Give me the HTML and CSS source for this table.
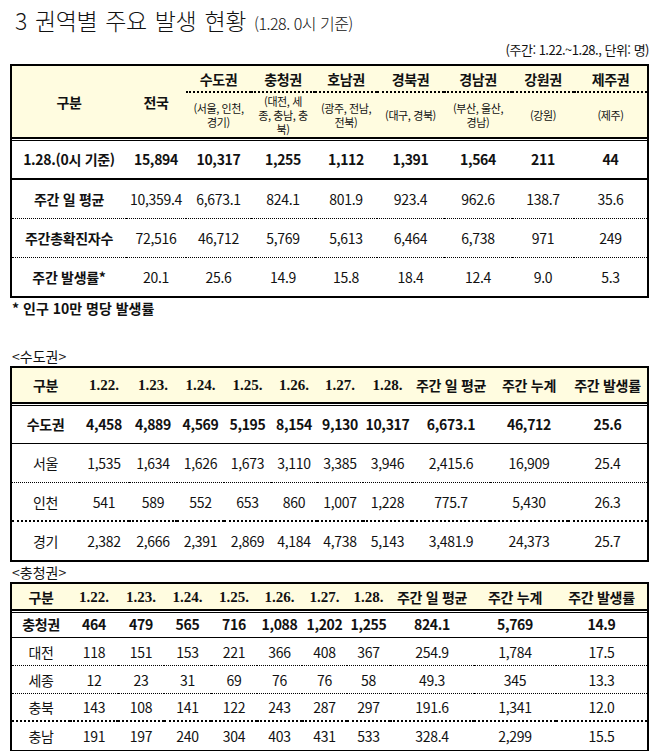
FILE: index.html
```html
<!DOCTYPE html>
<html lang="ko">
<head>
<meta charset="utf-8">
<title>권역별 주요 발생 현황</title>
<link rel="stylesheet" href="styles.css">
</head>
<body>
<div class="page">
  <h1 class="title">3 권역별 주요 발생 현황 <small>(1.28. 0시 기준)</small></h1>
  <div class="unit">(주간: 1.22.~1.28., 단위: 명)</div>

  <table class="tbl t1">
    <colgroup>
      <col style="width:114px"><col style="width:60px"><col style="width:65px"><col style="width:64px"><col style="width:62px"><col style="width:67px"><col style="width:68px"><col style="width:62px"><col style="width:73px">
    </colgroup>
    <tr class="ra">
      <td class="hcell span" rowspan="2">구분</td>
      <td class="hcell span" rowspan="2">전국</td>
      <td class="hcell reg">수도권</td>
      <td class="hcell reg">충청권</td>
      <td class="hcell reg">호남권</td>
      <td class="hcell reg">경북권</td>
      <td class="hcell reg">경남권</td>
      <td class="hcell reg">강원권</td>
      <td class="hcell reg">제주권</td>
    </tr>
    <tr class="rb">
      <td class="hcell sub">(서울, 인천,<br>경기)</td>
      <td class="hcell sub">(대전, 세<br>종, 충남, 충<br>북)</td>
      <td class="hcell sub">(광주, 전남,<br>전북)</td>
      <td class="hcell sub">(대구, 경북)</td>
      <td class="hcell sub">(부산, 울산,<br>경남)</td>
      <td class="hcell sub">(강원)</td>
      <td class="hcell sub">(제주)</td>
    </tr>
    <tr class="first bold r41 line2">
      <td>1.28.(0시 기준)</td><td>15,894</td><td>10,317</td><td>1,255</td><td>1,112</td><td>1,391</td><td>1,564</td><td>211</td><td>44</td>
    </tr>
    <tr class="r39 dot1">
      <td class="lab">주간 일 평균</td><td>10,359.4</td><td>6,673.1</td><td>824.1</td><td>801.9</td><td>923.4</td><td>962.6</td><td>138.7</td><td>35.6</td>
    </tr>
    <tr class="r39 dot1">
      <td class="lab">주간총확진자수</td><td>72,516</td><td>46,712</td><td>5,769</td><td>5,613</td><td>6,464</td><td>6,738</td><td>971</td><td>249</td>
    </tr>
    <tr class="r38">
      <td class="lab">주간 발생률*</td><td>20.1</td><td>25.6</td><td>14.9</td><td>15.8</td><td>18.4</td><td>12.4</td><td>9.0</td><td>5.3</td>
    </tr>
  </table>
  <p class="note">* 인구 10만 명당 발생률</p>

  <p class="label gap">&lt;수도권&gt;</p>
  <table class="tbl t2">
    <colgroup>
      <col style="width:67px"><col style="width:50px"><col style="width:48px"><col style="width:47px"><col style="width:47px"><col style="width:46px"><col style="width:46px"><col style="width:49px"><col style="width:78px"><col style="width:78px"><col style="width:79px">
    </colgroup>
    <tr class="hd r36">
      <td>구분</td><td class="dt">1.22.</td><td class="dt">1.23.</td><td class="dt">1.24.</td><td class="dt">1.25.</td><td class="dt">1.26.</td><td class="dt">1.27.</td><td class="dt">1.28.</td><td>주간 일 평균</td><td>주간 누계</td><td>주간 발생률</td>
    </tr>
    <tr class="first bold r40 line1">
      <td>수도권</td><td>4,458</td><td>4,889</td><td>4,569</td><td>5,195</td><td>8,154</td><td>9,130</td><td>10,317</td><td>6,673.1</td><td>46,712</td><td>25.6</td>
    </tr>
    <tr class="r39 dot1">
      <td>서울</td><td>1,535</td><td>1,634</td><td>1,626</td><td>1,673</td><td>3,110</td><td>3,385</td><td>3,946</td><td>2,415.6</td><td>16,909</td><td>25.4</td>
    </tr>
    <tr class="r39 dot2">
      <td>인천</td><td>541</td><td>589</td><td>552</td><td>653</td><td>860</td><td>1,007</td><td>1,228</td><td>775.7</td><td>5,430</td><td>26.3</td>
    </tr>
    <tr class="r38">
      <td>경기</td><td>2,382</td><td>2,666</td><td>2,391</td><td>2,869</td><td>4,184</td><td>4,738</td><td>5,143</td><td>3,481.9</td><td>24,373</td><td>25.7</td>
    </tr>
  </table>

  <p class="label">&lt;충청권&gt;</p>
  <table class="tbl t3">
    <colgroup>
      <col style="width:58px"><col style="width:48px"><col style="width:46px"><col style="width:47px"><col style="width:46px"><col style="width:45px"><col style="width:45px"><col style="width:43px"><col style="width:84px"><col style="width:82px"><col style="width:91px">
    </colgroup>
    <tr class="hd r27">
      <td>구분</td><td class="dt">1.22.</td><td class="dt">1.23.</td><td class="dt">1.24.</td><td class="dt">1.25.</td><td class="dt">1.26.</td><td class="dt">1.27.</td><td class="dt">1.28.</td><td>주간 일 평균</td><td>주간 누계</td><td>주간 발생률</td>
    </tr>
    <tr class="first bold r27 line1">
      <td>충청권</td><td>464</td><td>479</td><td>565</td><td>716</td><td>1,088</td><td>1,202</td><td>1,255</td><td>824.1</td><td>5,769</td><td>14.9</td>
    </tr>
    <tr class="r28 dot1">
      <td>대전</td><td>118</td><td>151</td><td>153</td><td>221</td><td>366</td><td>408</td><td>367</td><td>254.9</td><td>1,784</td><td>17.5</td>
    </tr>
    <tr class="r28 dot1">
      <td>세종</td><td>12</td><td>23</td><td>31</td><td>69</td><td>76</td><td>76</td><td>58</td><td>49.3</td><td>345</td><td>13.3</td>
    </tr>
    <tr class="r28 dot2">
      <td>충북</td><td>143</td><td>108</td><td>141</td><td>122</td><td>243</td><td>287</td><td>297</td><td>191.6</td><td>1,341</td><td>12.0</td>
    </tr>
    <tr class="r28">
      <td>충남</td><td>191</td><td>197</td><td>240</td><td>304</td><td>403</td><td>431</td><td>533</td><td>328.4</td><td>2,299</td><td>15.5</td>
    </tr>
  </table>
</div>
</body>
</html>
```
FILE: styles.css
```css
* { box-sizing: border-box; }

body {
  margin: 0;
  background: #fff;
  color: #111;
  font-family: "Noto Sans CJK KR", "Noto Sans", sans-serif;
}

.page {
  width: 651px;
  padding: 6px 0 0 10px;
}

.title {
  margin: 0 0 0 5px;
  font-size: 23px;
  font-weight: 300;
  line-height: 28px;
  letter-spacing: -0.4px;
  word-spacing: 2px;
  color: #111;
}

.title small {
  font-size: 16px;
  letter-spacing: -0.5px;
  word-spacing: 0;
}

.unit {
  margin: 3px 2px 4px 0;
  text-align: right;
  font-size: 13px;
  line-height: 20px;
  letter-spacing: -0.5px;
}

.tbl {
  border-collapse: separate;
  border-spacing: 0;
  border: 2px solid #000;
  width: 639px;
  table-layout: fixed;
}

.tbl td {
  padding: 0;
  text-align: center;
  vertical-align: middle;
  font-size: 14px;
  line-height: 18px;
  white-space: nowrap;
  letter-spacing: -0.3px;
}

/* header of table 1 */
.hcell {
  background: #fffce0;
}

.span {
  font-weight: bold;
  border-bottom: 2px solid #000;
}

.ra td.reg {
  height: 27px;
  font-weight: bold;
  border-bottom: 2px dotted #000;
}

.rb td {
  height: 46px;
  border-bottom: 2px solid #000;
}

.sub {
  font-size: 11px !important;
  line-height: 14px !important;
  letter-spacing: -0.4px !important;
}

/* header of tables 2/3 */
.hd td {
  background: #fffce0;
  font-weight: bold;
  border-bottom: 2px solid #000;
}

.hd td.dt {
  font-family: "Liberation Serif", serif;
  font-size: 15px;
  letter-spacing: 0;
}

.first td {
  box-shadow: inset 0 1px 0 #fff, inset 0 2px 0 #000;
}

.bold td { font-weight: bold; }
.lab { font-weight: bold; }

.line2 td { border-bottom: 2px solid #000; }
.line1 td { border-bottom: 1px solid #000; }
.dot1 td { border-bottom: 1px dotted #000; }
.dot2 td { border-bottom: 2px dotted #000; }

.r41 td { height: 41px; }
.r40 td { height: 40px; }
.r39 td { height: 39px; }
.r38 td { height: 38px; }
.r36 td { height: 36px; }
.r28 td { height: 28px; }
.r27 td { height: 27px; }

.note {
  margin: 0;
  padding-left: 2px;
  font-size: 14px;
  font-weight: bold;
  line-height: 20px;
}

.label {
  margin: 0;
  padding-left: 2px;
  font-size: 14px;
  line-height: 20px;
}

.label.gap { margin-top: 28px; }
```
